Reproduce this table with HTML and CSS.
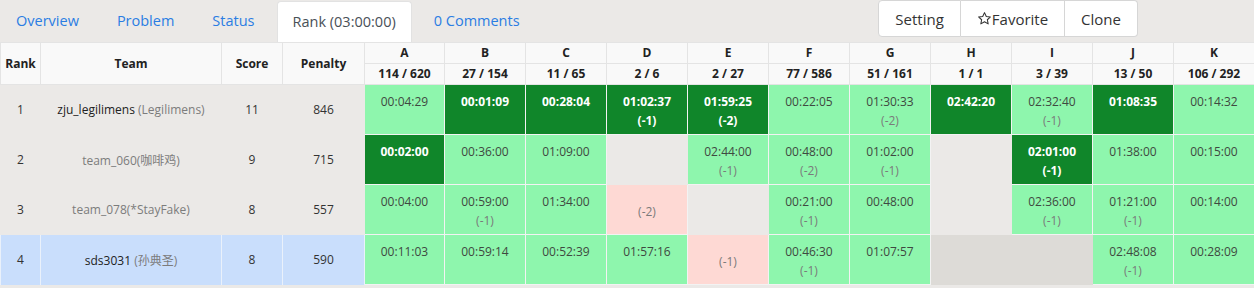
FILE: index.html
```html
<!DOCTYPE html>
<html>
<head>
<meta charset="utf-8">
<link rel="stylesheet" href="styles.css">
</head>
<body>
<div class="top">
  <nav class="tabs">
    <a class="tab">Overview</a>
    <a class="tab">Problem</a>
    <a class="tab">Status</a>
    <span class="tab active">Rank (03:00:00)</span>
    <a class="tab">0 Comments</a>
  </nav>
  <div class="btn-group">
    <button class="btn">Setting</button>
    <button class="btn"><svg class="star" viewBox="0 0 24 24"><path d="M12 2.6l2.85 6.05 6.6.82-4.87 4.55 1.27 6.55L12 17.330l-5.85 3.240 1.27-6.55-4.87-4.55 6.6-.82z"/></svg>Favorite</button>
    <button class="btn">Clone</button>
  </div>
</div>
<table class="rank">
  <colgroup>
    <col class="c-rank"><col class="c-team"><col class="c-score"><col class="c-pen">
    <col class="c-pa"><col class="c-p"><col class="c-p"><col class="c-p"><col class="c-p"><col class="c-p"><col class="c-p"><col class="c-p"><col class="c-p"><col class="c-p"><col class="c-p">
  </colgroup>
  <thead>
    <tr class="h1">
      <th rowspan="2">Rank</th><th rowspan="2">Team</th><th rowspan="2">Score</th><th rowspan="2">Penalty</th>
      <th>A</th><th>B</th><th>C</th><th>D</th><th>E</th><th>F</th><th>G</th><th>H</th><th>I</th><th>J</th><th>K</th>
    </tr>
    <tr class="h2">
      <th>114 / 620</th><th>27 / 154</th><th>11 / 65</th><th>2 / 6</th><th>2 / 27</th><th>77 / 586</th><th>51 / 161</th><th>1 / 1</th><th>3 / 39</th><th>13 / 50</th><th>106 / 292</th>
    </tr>
  </thead>
  <tbody>
    <tr>
      <td class="info">1</td><td class="info"><span class="name">zju_legilimens</span> <span class="sub">(Legilimens)</span></td><td class="info">11</td><td class="info">846</td>
      <td class="ac">00:04:29</td>
      <td class="fb">00:01:09</td>
      <td class="fb">00:28:04</td>
      <td class="fb">01:02:37<br>(-1)</td>
      <td class="fb">01:59:25<br>(-2)</td>
      <td class="ac">00:22:05</td>
      <td class="ac">01:30:33<br><span class="pn">(-2)</span></td>
      <td class="fb">02:42:20</td>
      <td class="ac">02:32:40<br><span class="pn">(-1)</span></td>
      <td class="fb">01:08:35</td>
      <td class="ac">00:14:32</td>
    </tr>
    <tr>
      <td class="info">2</td><td class="info"><span class="sub">team_060(咖啡鸡)</span></td><td class="info">9</td><td class="info">715</td>
      <td class="fb">00:02:00</td>
      <td class="ac">00:36:00</td>
      <td class="ac">01:09:00</td>
      <td class="none"></td>
      <td class="ac">02:44:00<br><span class="pn">(-1)</span></td>
      <td class="ac">00:48:00<br><span class="pn">(-2)</span></td>
      <td class="ac">01:02:00<br><span class="pn">(-1)</span></td>
      <td class="none"></td>
      <td class="fb">02:01:00<br>(-1)</td>
      <td class="ac">01:38:00</td>
      <td class="ac">00:15:00</td>
    </tr>
    <tr>
      <td class="info">3</td><td class="info"><span class="sub">team_078(*StayFake)</span></td><td class="info">8</td><td class="info">557</td>
      <td class="ac">00:04:00</td>
      <td class="ac">00:59:00<br><span class="pn">(-1)</span></td>
      <td class="ac">01:34:00</td>
      <td class="wa"><span class="pn">(-2)</span></td>
      <td class="none"></td>
      <td class="ac">00:21:00<br><span class="pn">(-1)</span></td>
      <td class="ac">00:48:00</td>
      <td class="none"></td>
      <td class="ac">02:36:00<br><span class="pn">(-1)</span></td>
      <td class="ac">01:21:00<br><span class="pn">(-1)</span></td>
      <td class="ac">00:14:00</td>
    </tr>
    <tr class="me">
      <td class="info">4</td><td class="info"><span class="name">sds3031</span> <span class="sub">(孙典圣)</span></td><td class="info">8</td><td class="info">590</td>
      <td class="ac">00:11:03</td>
      <td class="ac">00:59:14</td>
      <td class="ac">00:52:39</td>
      <td class="ac">01:57:16</td>
      <td class="wa"><span class="pn">(-1)</span></td>
      <td class="ac">00:46:30<br><span class="pn">(-1)</span></td>
      <td class="ac">01:07:57</td>
      <td class="none"></td>
      <td class="none"></td>
      <td class="ac">02:48:08<br><span class="pn">(-1)</span></td>
      <td class="ac">00:28:09</td>
    </tr>
  </tbody>
</table>
</body>
</html>
```

FILE: styles.css
```css
html, body {
  margin: 0;
  padding: 0;
}
body {
  background: #ebe9e7;
  font-family: "Open Sans", "Noto Sans CJK SC", sans-serif;
  color: #333;
  width: 1254px;
  overflow: hidden;
}
.top {
  display: flex;
  height: 42px;
}
.tabs {
  display: flex;
  align-items: flex-end;
  gap: 6px;
}
.tab {
  display: block;
  height: 41px;
  line-height: 40px;
  padding: 0 16px;
  font-size: 14.5px;
  color: #2a7de3;
  box-sizing: border-box;
  white-space: nowrap;
}
.tab.active {
  background: #fff;
  color: #495057;
  border: 1px solid #e2e2e2;
  border-bottom: none;
  border-radius: 4px 4px 0 0;
  padding: 0 15px;
}
.btn-group {
  display: flex;
  margin-left: auto;
  margin-right: 116px;
  height: 37px;
  align-self: flex-start;
}
.btn {
  font-family: inherit;
  font-size: 15px;
  color: #333;
  background: #fff;
  border: 1px solid #d6d6d6;
  border-left: none;
  padding: 0 16px;
  height: 37px;
  display: flex;
  align-items: center;
  margin: 0;
}
.btn:first-child {
  border-left: 1px solid #d6d6d6;
  border-radius: 4px 0 0 4px;
}
.btn:last-child {
  border-radius: 0 4px 4px 0;
}
.star {
  width: 15px;
  height: 15px;
  fill: none;
  stroke: #333;
  stroke-width: 1.7;
  stroke-linejoin: round;
}
.rank {
  width: 1254px;
  table-layout: fixed;
  border-collapse: collapse;
  font-size: 12px;
}
.c-rank { width: 40px; }
.c-team { width: 181px; }
.c-score { width: 61px; }
.c-pen { width: 82px; }
.c-pa { width: 80px; }
.c-p { width: 81px; }
.rank th {
  background: #f9f9f9;
  border: 1px solid #e4e4e4;
  font-weight: bold;
  color: #222;
  padding: 0;
  height: 20px;
  line-height: 20px;
  text-align: center;
}
.rank tbody td {
  height: 50px;
  padding: 0;
  text-align: center;
  box-sizing: border-box;
  border: 1px solid #f3f3f3;
}
.rank td.info {
  border-color: transparent;
  vertical-align: middle;
  color: #333;
}
.rank tr.me td.info {
  background: #c9defc;
  border-left-color: #eaf1fb;
  border-right-color: #eaf1fb;
  border-top-color: #c9defc;
}
.name { color: #222; }
.sub { color: #7c7c7c; }
.ac, .fb {
  vertical-align: top;
  padding-top: 7px !important;
  line-height: 19px;
}
.ac {
  background: #8ef6ad;
  color: #3f4941;
}
.fb {
  background: #10862a;
  color: #fff;
  font-weight: bold;
}
.pn { color: #7a7a7a; }
.wa {
  background: #fed9d4;
  vertical-align: middle;
  padding-top: 4px !important;
}
.none {
  background: transparent;
}
.rank tbody td.none {
  border-color: transparent;
}
.rank tr.me td.none {
  background: #dddbd7;
}
```
